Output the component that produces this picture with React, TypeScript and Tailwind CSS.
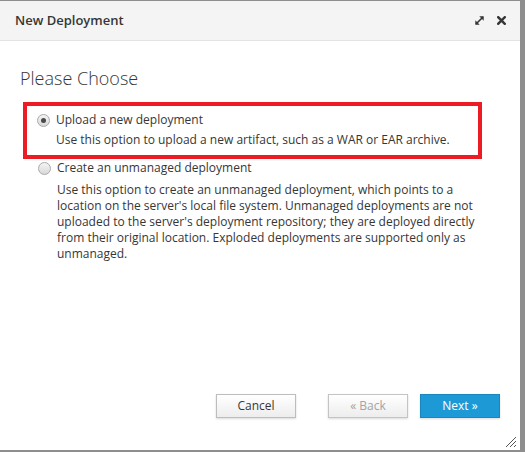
import type { ReactNode } from 'react';

function Radio({ checked }: { checked: boolean }) {
  return (
    <span className="flex h-[13px] w-[13px] shrink-0 items-center justify-center rounded-full border border-[#a9a9a9] bg-gradient-to-b from-[#f4f4f4] to-[#d9d9d9]">
      {checked && <span className="h-[5px] w-[5px] rounded-full bg-[#4a4a4a]" />}
    </span>
  );
}

function Btn({ children, variant }: { children: ReactNode; variant: 'default' | 'disabled' | 'primary' }) {
  const cls =
    variant === 'primary'
      ? 'border-[#1a86be] bg-[#1d9ad6] text-white'
      : variant === 'disabled'
        ? 'border-[#c4c4c4] bg-gradient-to-b from-white to-[#ededed] text-[#a3a3a3]'
        : 'border-[#bdbdbd] bg-gradient-to-b from-white to-[#ededed] text-[#363636]';
  return (
    <button
      type="button"
      className={`flex h-[24px] w-[80px] items-center justify-center border text-[12px] shadow-[0_1px_2px_rgba(0,0,0,0.15)] ${cls}`}
    >
      {children}
    </button>
  );
}

export default function App() {
  return (
    <div className="h-[452px] w-[525px] bg-[#8e8e8e] pt-px font-['Open_Sans',sans-serif] text-[#363636]">
      <div className="relative flex h-[449px] w-[520px] flex-col bg-white">
        <header className="flex h-[40px] items-center justify-between border-b border-[#e4e4e4] bg-[#f4f4f4] pl-[15px] pr-[14px]">
          <h1 className="text-[13px] font-semibold text-[#363636]">New Deployment</h1>
          <div className="flex items-center gap-[12px]">
            <svg width="11" height="11" viewBox="0 0 11 11" fill="none" stroke="#363636" strokeWidth="1.6">
              <path d="M2 9 L9 2" />
              <path d="M5.3 1.3 L9.7 1.3 L9.7 5.7 Z" fill="#363636" stroke="none" />
              <path d="M1.3 5.3 L1.3 9.7 L5.7 9.7 Z" fill="#363636" stroke="none" />
            </svg>
            <svg width="9" height="9" viewBox="0 0 9 9" stroke="#363636" strokeWidth="2.4" strokeLinecap="square">
              <path d="M1.2 1.2 L7.8 7.8 M7.8 1.2 L1.2 7.8" />
            </svg>
          </div>
        </header>

        <main className="flex flex-1 flex-col px-[20px] pt-[25px]">
          <h2 className="text-[18px] font-light leading-[24px] text-[#363636]">Please Choose</h2>

          <div className="mt-[12px] ml-[3px] w-[459px] border-[4.5px] border-[#ed1c24] pb-[7px] pl-[10px] pt-[5px]">
            <label className="flex items-center gap-[6px] text-[12px] leading-[18px]">
              <Radio checked />
              <span>Upload a new deployment</span>
            </label>
            <p className="mt-[3px] pl-[19px] text-[12px] leading-[16px]">
              Use this option to upload a new artifact, such as a WAR or EAR archive.
            </p>
          </div>

          <div className="ml-[18px] mt-[0px] w-[460px]">
            <label className="flex items-center gap-[6px] text-[12px] leading-[18px]">
              <Radio checked={false} />
              <span>Create an unmanaged deployment</span>
            </label>
            <p className="mt-[5px] pl-[19px] text-[12px] leading-[16px]">
              Use this option to create an unmanaged deployment, which points to a location on the server's local
              file system. Unmanaged deployments are not uploaded to the server's deployment repository; they are
              deployed directly from their original location. Exploded deployments are supported only as unmanaged.
            </p>
          </div>

          <div className="mt-auto mb-[32px] flex justify-end gap-[12px]">
            <Btn variant="default">Cancel</Btn>
            <div className="w-[8px]" />
            <Btn variant="disabled">« Back</Btn>
            <Btn variant="primary">Next »</Btn>
          </div>
        </main>

        <svg className="absolute bottom-[2px] right-[3px]" width="12" height="12" viewBox="0 0 12 12" stroke="#555" strokeWidth="1">
          <path d="M1 11 L11 1 M5 11 L11 5 M9 11 L11 9" />
        </svg>
      </div>
    </div>
  );
}
